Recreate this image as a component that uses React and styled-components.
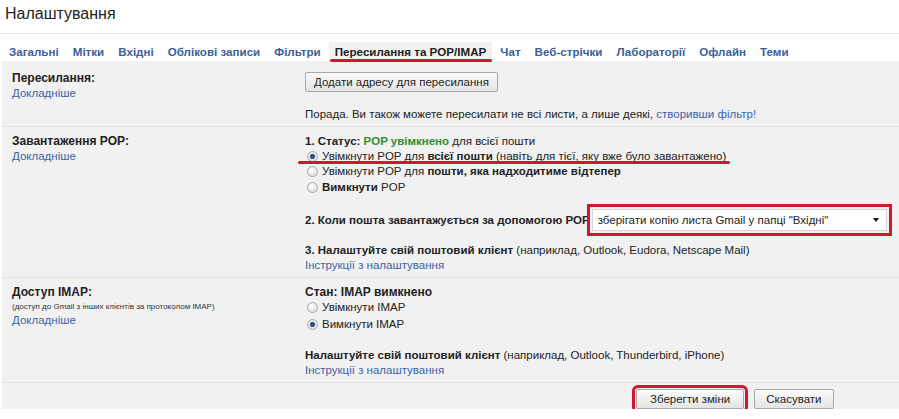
import React from "react";
import styled, { createGlobalStyle } from "styled-components";

const GlobalStyle = createGlobalStyle`
  body {
    margin: 0;
    background: #fff;
    font-family: "Liberation Sans", Arial, sans-serif;
    font-size: 11.5px;
    color: #222;
  }
`;

const tabs = [
  "Загальні",
  "Мітки",
  "Вхідні",
  "Облікові записи",
  "Фільтри",
  "Пересилання та POP/IMAP",
  "Чат",
  "Веб-стрічки",
  "Лабораторії",
  "Офлайн",
  "Теми",
];

const Title = styled.h1`
  margin: 0;
  height: 34px;
  padding: 5px 0 0 5px;
  box-sizing: border-box;
  font-size: 16px;
  font-weight: normal;
  color: #222;
  border-bottom: 1px solid #e5e5e5;
`;

const TabBar = styled.div`
  display: flex;
  align-items: flex-end;
  height: 27px;
  padding-left: 3px;
`;

const Tab = styled.div`
  position: relative;
  height: 19px;
  padding: 0 6px;
  margin-right: 2px;
  font-weight: bold;
  font-size: 11.6px;
  line-height: 19px;
  color: ${(p) => (p.$active ? "#222" : "#3b5f98")};
  background: ${(p) => (p.$active ? "#f1f1f1" : "transparent")};

  ${(p) =>
    p.$active &&
    `
    &::after {
      content: "";
      position: absolute;
      left: 1px;
      right: 0;
      bottom: -1px;
      height: 3px;
      border-radius: 2px;
      background: #d0172b;
    }
  `}
`;

const Panel = styled.div`
  margin-left: 2px;
  background: #f1f1f1;
`;

const Row = styled.div`
  display: grid;
  grid-template-columns: 303px 1fr;
  padding-top: ${(p) => p.$top};
  height: ${(p) => p.$h};
  border-bottom: 1px solid #e2e2e2;
  box-sizing: border-box;
`;

const Label = styled.div`
  padding-left: 10px;
  line-height: 15px;
`;

const LabelTitle = styled.div`
  font-weight: bold;
  font-size: 12px;
`;

const Small = styled.div`
  font-size: 8px;
  line-height: 13px;
  color: #333;
`;

const Link = styled.a`
  display: ${(p) => (p.$block ? "block" : "inline")};
  color: #3b62a5;
  text-decoration: none;
  cursor: pointer;
`;

const Body = styled.div`
  line-height: 15px;
`;

const Line = styled.div`
  margin-top: ${(p) => p.$mt || "0"};
`;

const Button = styled.button`
  display: block;
  font-family: "Liberation Sans", Arial, sans-serif;
  font-size: 11.5px;
  color: #222;
  height: 20px;
  padding: 0 ${(p) => p.$px || "8px"};
  margin-top: ${(p) => p.$mt || "0"};
  border: 1px solid #a8a8a8;
  border-radius: 2px;
  background: linear-gradient(#fbfbfb, #e4e4e4);
  cursor: pointer;
  outline: ${(p) => (p.$marked ? "3px solid #d0172b" : "none")};
  outline-offset: 1px;
`;

const Green = styled.span`
  color: #2f8f2f;
  font-weight: bold;
`;

const Option = styled.label`
  position: relative;
  display: flex;
  align-items: center;
  gap: 4px;
  padding-left: 2px;
  height: ${(p) => p.$h || "15px"};

  ${(p) =>
    p.$marked &&
    `
    &::after {
      content: "";
      position: absolute;
      left: -7px;
      width: 432px;
      bottom: 0;
      height: 2.5px;
      border-radius: 2px;
      background: #d0172b;
    }
  `}
`;

const Radio = styled.span`
  width: 9px;
  height: 9px;
  border-radius: 50%;
  border: 1px solid #a9a9a9;
  background: ${(p) =>
    p.$checked
      ? "radial-gradient(circle, #2d4f86 0 2.2px, #dfe7f2 2.8px)"
      : "radial-gradient(circle at 40% 35%, #fff, #d6d6d6)"};
  flex-shrink: 0;
`;

const Step = styled.div`
  display: flex;
  align-items: center;
  height: 22px;
  margin-top: 14px;
  font-weight: bold;
`;

const Select = styled.div`
  width: 295px;
  height: 22px;
  margin-left: 2px;
  box-sizing: border-box;
  display: flex;
  align-items: center;
  justify-content: space-between;
  padding: 0 7px 0 5px;
  background: #fff;
  border: 1px solid #d6d6d6;
  font-weight: normal;
  outline: 3px solid #d0172b;
  outline-offset: 2px;
`;

const Arrow = styled.span`
  width: 0;
  height: 0;
  border-left: 3.5px solid transparent;
  border-right: 3.5px solid transparent;
  border-top: 4px solid #111;
`;

const Actions = styled.div`
  display: flex;
  gap: 10px;
  height: 26px;
  padding: 6px 0 0 634px;
  box-sizing: border-box;
`;

export default function App() {
  return (
    <>
      <GlobalStyle />
      <Title>Налаштування</Title>
      <TabBar>
        {tabs.map((t, i) => (
          <Tab key={t} $active={i === 5}>
            {t}
          </Tab>
        ))}
      </TabBar>
      <Panel>
        <Row $top="9.5px" $h="66px">
          <Label>
            <LabelTitle>Пересилання:</LabelTitle>
            <Link $block>Докладніше</Link>
          </Label>
          <Body>
            <Button $mt="1.5px">Додати адресу для пересилання</Button>
            <Line $mt="14.5px">
              Порада. Ви також можете пересилати не всі листи, а лише деякі,{" "}
              <Link>створивши фільтр!</Link>
            </Line>
          </Body>
        </Row>

        <Row $top="6.5px" $h="151px">
          <Label>
            <LabelTitle>Завантаження POP:</LabelTitle>
            <Link $block>Докладніше</Link>
          </Label>
          <Body>
            <Line>
              <b>1. Статус: </b>
              <Green>POP увімкнено</Green> для всієї пошти
            </Line>
            <Option $marked>
              <Radio $checked />
              <span>
                Увімкнути POP для <b>всієї пошти</b> (навіть для тієї, яку вже
                було завантажено)
              </span>
            </Option>
            <Option $h="15.5px">
              <Radio />
              <span>
                Увімкнути POP для <b>пошти, яка надходитиме відтепер</b>
              </span>
            </Option>
            <Option $h="16px">
              <Radio />
              <span>
                <b>Вимкнути</b> POP
              </span>
            </Option>
            <Step>
              <span>2. Коли пошта завантажується за допомогою POP</span>
              <Select>
                <span>зберігати копію листа Gmail у папці "Вхідні"</span>
                <Arrow />
              </Select>
            </Step>
            <Line $mt="11.5px">
              <b>3. Налаштуйте свій поштовий клієнт</b> (наприклад, Outlook,
              Eudora, Netscape Mail)
            </Line>
            <Link $block>Інструкції з налаштування</Link>
          </Body>
        </Row>

        <Row $top="7px" $h="105px">
          <Label>
            <LabelTitle>Доступ IMAP:</LabelTitle>
            <Small>(доступ до Gmail з інших клієнтів за протоколом IMAP)</Small>
            <Link $block>Докладніше</Link>
          </Label>
          <Body>
            <LabelTitle>Стан: IMAP вимкнено</LabelTitle>
            <Option $h="15.5px">
              <Radio />
              <span>Увімкнути IMAP</span>
            </Option>
            <Option $h="17px">
              <Radio $checked />
              <span>Вимкнути IMAP</span>
            </Option>
            <Line $mt="15px">
              <b>Налаштуйте свій поштовий клієнт</b> (наприклад, Outlook,
              Thunderbird, iPhone)
            </Line>
            <Link $block>Інструкції з налаштування</Link>
          </Body>
        </Row>

        <Actions>
          <Button $px="13px" $marked>
            Зберегти зміни
          </Button>
          <Button $px="11px">Скасувати</Button>
        </Actions>
      </Panel>
    </>
  );
}
